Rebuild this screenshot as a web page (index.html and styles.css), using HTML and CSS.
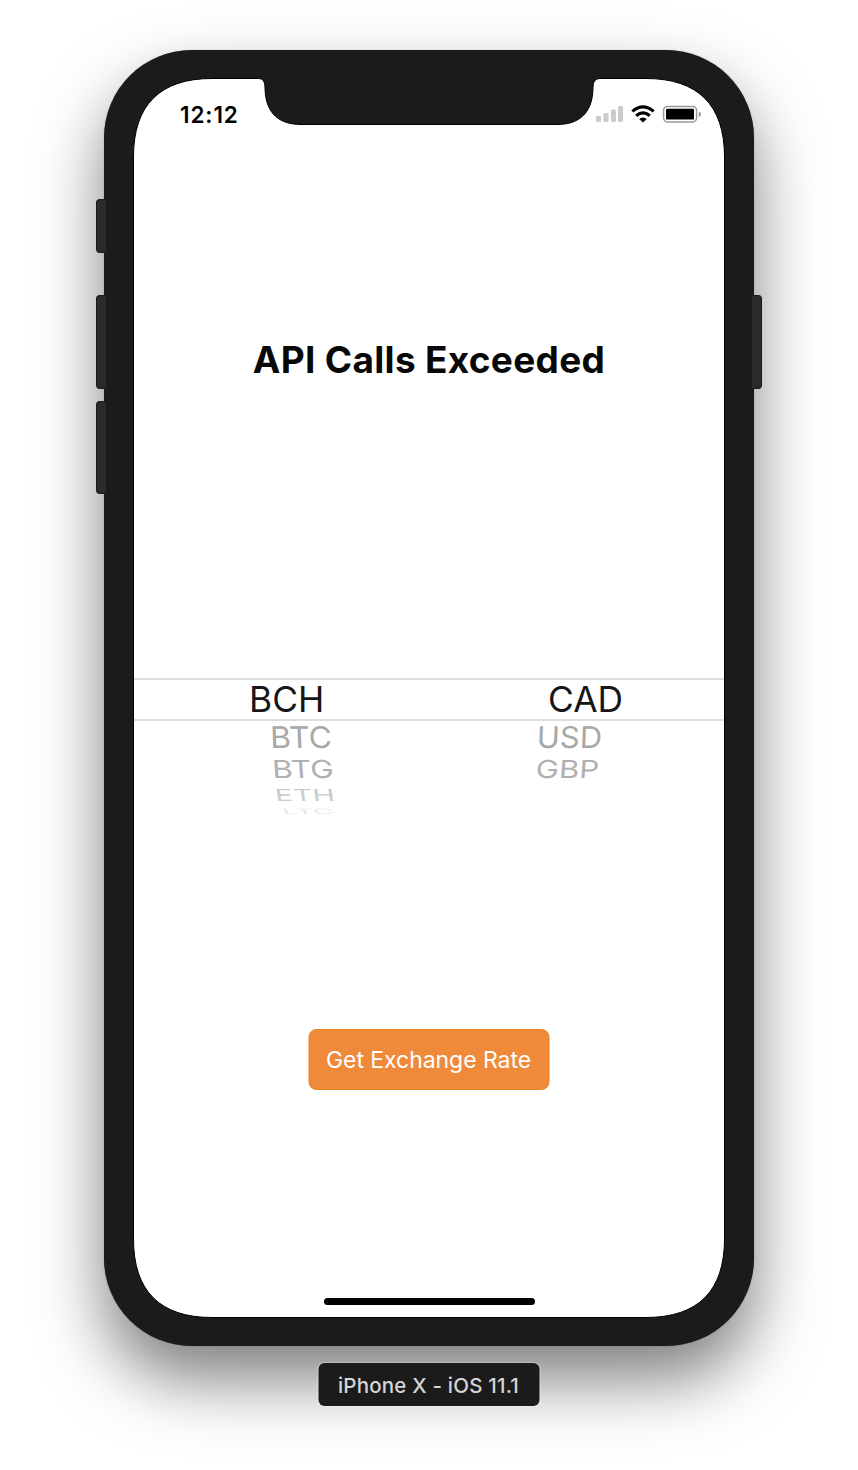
FILE: index.html
```html
<!DOCTYPE html>
<html lang="en">
<head>
<meta charset="utf-8">
<title>Exchange Rate</title>
<link rel="stylesheet" href="styles.css">
</head>
<body>
<main class="stage">
  <section class="phone">
    <i class="key mute"></i><i class="key vol-up"></i><i class="key vol-down"></i><i class="key power"></i>
    <div class="screen">
      <svg class="glass" viewBox="0 0 592 1240" aria-hidden="true">
        <path d="M.5 79C.5 27 27 .5 79 .5H125.500Q132 .5 132 9C132 31 142 46.500 168 46.500H424C450 46.500 460 31 460 9Q460 .5 467 .5H513C565 .5 591.500 27 591.500 79V1161C591.500 1213 565 1239.500 513 1239.500H79C27 1239.500 .5 1213 .5 1161Z"/>
      </svg>
      <header class="status">
        <time class="clock">12:12</time>
        <svg class="indicators" viewBox="0 0 107 18" aria-hidden="true">
          <g fill="#ccc">
            <rect x="1" y="11" width="5" height="6" rx="1.3"/>
            <rect x="8.500" y="8" width="5" height="9" rx="1.3"/>
            <rect x="16" y="4.600" width="5" height="12.400" rx="1.3"/>
            <rect x="23" y="1" width="5" height="16" rx="1.3"/>
          </g>
          <g fill="none" stroke="#000" stroke-width="3.200">
            <path d="M37.300 6.400Q48 -2.600 58.700 6.400"/>
            <path d="M41.200 10.700Q48 5 54.800 10.700"/>
          </g>
          <path d="M44.200 14.100Q48 11 51.800 14.100L48 17.600Z"/>
          <rect x="68.600" y="1.400" width="33" height="15.600" rx="4" fill="#fff" stroke="#999" stroke-width="1.500"/>
          <rect x="71" y="3.800" width="28" height="10.800" rx="1.200"/>
          <path d="M103.800 6.400Q106 7.200 106 9.200T103.800 12Z" fill="#999"/>
        </svg>
      </header>
      <h1 class="result">API Calls Exceeded</h1>
      <div class="picker">
        <div class="wheel crypto">
          <div class="row r0"><span>BCH</span></div>
          <div class="row r1"><span>BTC</span></div>
          <div class="row r2"><span>BTG</span></div>
          <div class="row r3"><span>ETH</span></div>
          <div class="row r4"><span>LTC</span></div>
        </div>
        <div class="wheel fiat">
          <div class="row r0"><span>CAD</span></div>
          <div class="row r1"><span>USD</span></div>
          <div class="row r2"><span>GBP</span></div>
        </div>
      </div>
      <button class="fetch">Get Exchange Rate</button>
      <div class="home"></div>
    </div>
  </section>
  <div class="device">iPhone X - iOS 11.1</div>
</main>
</body>
</html>
```
FILE: styles.css
```css
* { box-sizing: border-box; }
body { margin: 0; background: #fff; font-family: Inter, "Liberation Sans", sans-serif; color: #000; }
.stage { height: 1470px; padding-top: 50px; display: flex; flex-direction: column; align-items: center; overflow: hidden; }
.phone {
  position: relative; flex: none; width: 650px; height: 1296px; padding: 29px 30px;
  background: #1b1b1b; border-radius: 88px;
  box-shadow: 0 0 1px 0 rgba(0,0,0,.5), 0 34px 66px rgba(0,0,0,.5);
}
.key { position: absolute; width: 10px; background: #2a2a2a; border: 1px solid #1b1b1b; }
.mute, .vol-up, .vol-down { left: -8px; border-right: 0; border-radius: 4px 0 0 4px; }
.mute { top: 149px; height: 54px; }
.vol-up { top: 245px; height: 94px; }
.vol-down { top: 351px; height: 93px; }
.power { right: -8px; top: 245px; height: 94px; border-left: 0; border-radius: 0 4px 4px 0; }
.screen { position: relative; height: 1238px; display: flex; flex-direction: column; align-items: center; isolation: isolate; }
.glass { position: absolute; z-index: -1; left: -1px; top: -1px; width: 592px; height: 1240px; fill: #fff; stroke: #000; stroke-width: 1; }
.status { width: 100%; height: 70px; padding: 0 22px 0 46px; display: flex; align-items: center; justify-content: space-between; }
.clock { font-size: 22.500px; font-weight: 600; letter-spacing: .9px; }
.indicators { width: 107px; height: 18px; }
.result { margin: 186px 0 0; height: 50px; font-size: 37px; line-height: 50px; font-weight: 700; letter-spacing: .3px; white-space: nowrap; color: #080808; }
.picker { width: 100%; margin-top: 293px; height: 142px; display: grid; grid-template-columns: 1fr 1fr; }
.row { display: flex; align-items: center; height: 31px; line-height: 1; color: #a8a8a8; font-size: 30px; }
.row span { display: block; transform-origin: 0 50%; }
.r0 { height: 43px; border: solid #dedede; border-width: 2px 0; color: #161616; font-size: 35px; }
.r2 { height: 33px; color: #b0b0b0; }
.r3 { height: 20px; color: #ccc; }
.r4 { height: 11px; color: #e8e8e8; }
.crypto .r0 { padding-left: 114.500px; }
.crypto .r1 { padding-left: 136px; }
.crypto .r2 { padding-left: 138px; }
.crypto .r3 { padding-left: 141px; }
.crypto .r4 { padding-left: 148px; }
.fiat .r0 { padding-left: 118.500px; }
.fiat .r1 { padding-left: 107.500px; }
.fiat .r2 { padding-left: 107px; }
.r0 span { transform: scaleX(1.01); }
.crypto .r1 span { transform: skewX(2deg) scaleX(1.06); }
.crypto .r2 span { transform: skewX(4deg) scale(1.05,.83); }
.crypto .r3 span { transform: skewX(8deg) scaleY(.55); }
.crypto .r4 span { transform: skewX(20deg) scale(.95,.24); }
.fiat .r1 span { transform: skewX(-2deg) scaleX(1.03); }
.fiat .r2 span { transform: skewX(-4deg) scale(1.03,.83); }
.fetch {
  margin-top: 209px; width: 241px; height: 61px; padding: 2px 0 0; border: 1px solid #e9821f; border-radius: 8px; transform: translateX(-.5px);
  background: #f08a3b; color: #fff; font: 400 23px/1 Inter, sans-serif; letter-spacing: -.05px; white-space: nowrap;
}
.home { margin-top: 208px; width: 211px; height: 7px; border-radius: 4px; background: #000; }
.device {
  position: relative; margin-top: 17px; width: 221px; height: 43px; padding-top: 2px; border-radius: 6px; background: #1b1b1b; color: #d5d5d5; transform: translateX(-.5px);
  display: flex; align-items: center; justify-content: center; font-size: 20.500px; font-weight: 500; letter-spacing: .2px; white-space: nowrap;
  box-shadow: 0 0 1px 1px rgba(255,255,255,.25);
}
```
